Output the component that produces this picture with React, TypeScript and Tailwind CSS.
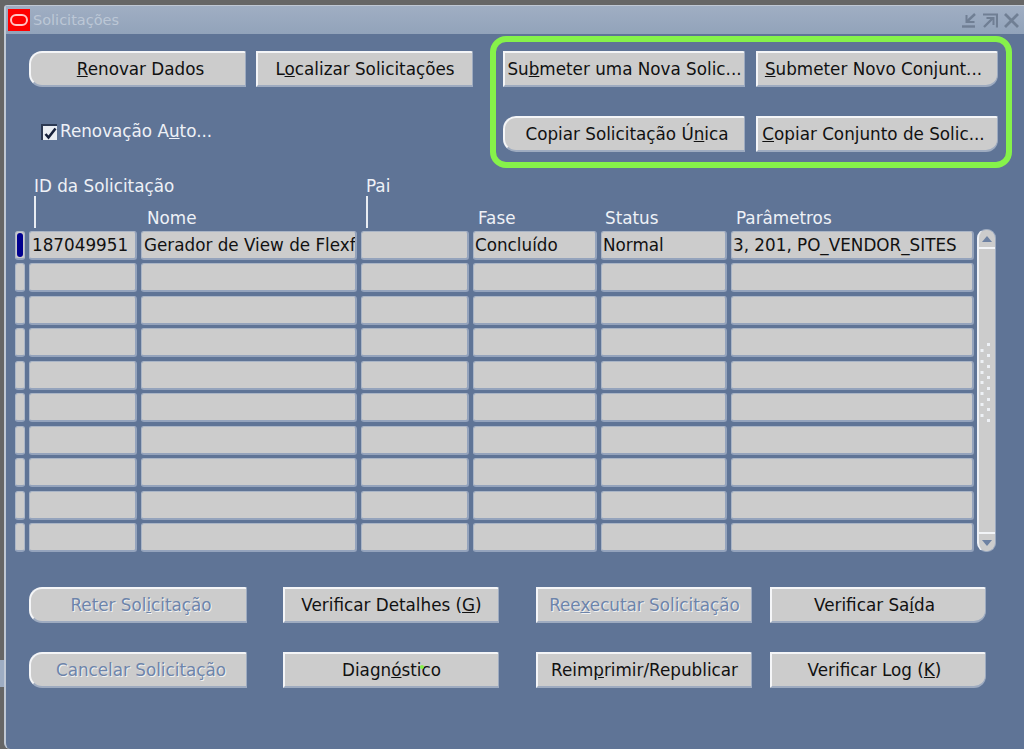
import React from "react";

const font = "font-['DejaVu_Sans',sans-serif]";

type Shape = "left" | "right" | "none";

function Btn({ w, shape = "none", disabled = false, children }: { w: string; shape?: Shape; disabled?: boolean; children: React.ReactNode }) {
  const r = shape === "left" ? "rounded-l-[13px] pl-[5px]" : shape === "right" ? "rounded-r-[12px] pr-[8px]" : "";
  const t = disabled
    ? "text-[#6d84aa] [text-shadow:1px_1px_0_#f2f2f2]"
    : "text-[#111111]";
  return (
    <div
      className={`${w} ${r} ${t} h-[36px] shrink-0 flex items-center justify-center whitespace-nowrap bg-[#cccccc] border-t-2 border-l-2 border-t-[#f4f5f7] border-l-[#f4f5f7] border-b-2 border-r border-b-[#9eabc0] border-r-[#9eabc0] rounded-tr-[2px] pt-[2px] text-[16.8px]`}
    >
      {children}
    </div>
  );
}

function Cell({ children }: { children?: React.ReactNode }) {
  return (
    <div className="bg-[#cccccc] rounded-[3px] border border-[#aab5c6] border-b-2 border-r-2 border-b-[#94a3bc] border-r-[#94a3bc] flex items-center pl-[1px] pt-[2px] text-[16.8px] text-[#111111] whitespace-nowrap overflow-hidden">
      {children}
    </div>
  );
}

function Selector({ active }: { active?: boolean }) {
  return (
    <div className="bg-[#cccccc] rounded-[3px] border border-[#aeb8c8] border-b-2 border-b-[#94a3bc] flex p-px">
      {active && <div className="flex-1 bg-[#00008f] rounded-[3px]" />}
    </div>
  );
}

function Tick() {
  return <div className="w-[2px] h-[32px] bg-[#e8ecf2] ml-[5px] shrink-0" />;
}

function Grip() {
  const left = [349, 360, 371, 381, 392, 403, 414];
  const right = [343, 354, 365, 376, 387, 398, 408, 419];
  return (
    <svg width="14" height="82" viewBox="981 340 14 82" className="mb-[20px]">
      {left.map((y) => (
        <rect key={`l${y}`} x="981.5" y={y} width="3" height="3" fill="#eef1f6" />
      ))}
      {right.map((y) => (
        <rect key={`r${y}`} x="988" y={y} width="3" height="3" fill="#eef1f6" />
      ))}
    </svg>
  );
}

const rowBlank = [2, 3, 4, 5, 6, 7, 8, 9, 10];

export default function App() {
  return (
    <div className={`${font} relative w-[1024px] h-[749px] overflow-hidden bg-[#666666] pt-[5px] pl-[4px] flex flex-col`}>
      <div className="absolute left-0 top-[660px] w-[4px] h-[27px] bg-[#9dacc2]" />
      <div className="flex-1 flex flex-col bg-[#5f7496] border-l-2 border-t border-[#c0c8d4] rounded-tl-[3px] rounded-bl-[6px] min-h-0">
        {/* title bar */}
        <div className="h-[28px] shrink-0 bg-gradient-to-b from-[#a0aec3] to-[#92a3ba] flex items-center pl-[2px] pr-[5px]">
          <div className="w-[22px] h-[22px] bg-[#ff0000] flex items-center justify-center shrink-0">
            <div className="w-[18px] h-[12px] rounded-[6px] border-2 border-[#ffc4c4]" />
          </div>
          <span className="ml-[3px] pt-[2px] text-[14.5px] text-[#bcc7d6]">Solicitações</span>
          <div className="ml-auto flex items-center gap-[6px]">
            <svg width="15" height="15" viewBox="0 0 15 15" fill="none" stroke="#707f94" strokeWidth="2.4">
              <path d="M0 13.5h13" />
              <path d="M13 1 5 8.5" />
              <path d="M4.5 2v7h8" strokeWidth="2" />
            </svg>
            <svg width="15" height="15" viewBox="0 0 15 15" fill="none" stroke="#707f94" strokeWidth="2.2">
              <path d="M0 1.5h14v13" />
              <path d="M1 14 10 5" strokeWidth="2.4" />
              <path d="M3.5 5h7v7" strokeWidth="2" />
            </svg>
            <svg width="15" height="15" viewBox="0 0 15 15" fill="none" stroke="#707f94" strokeWidth="2.8">
              <path d="M1 1l13 13M14 1 1 14" />
            </svg>
          </div>
        </div>

        {/* top section */}
        <div className="flex pl-[23px] shrink-0">
          <div className="w-[461px] pt-[17px] shrink-0">
            <div className="flex gap-[10px]">
              <Btn w="w-[217px]" shape="left"><span><u>R</u>enovar Dados</span></Btn>
              <Btn w="w-[217px]"><span>L<u>o</u>calizar Solicitações</span></Btn>
            </div>
            <div className="flex items-center ml-[12px] mt-[37px] h-[16px]">
              <div className="w-[16px] h-[16px] bg-[#e9edf3] border-l-2 border-t-2 border-[#2b3852] flex items-center justify-center shrink-0">
                <svg width="13" height="13" viewBox="0 0 13 13" fill="none" stroke="#16203a" strokeWidth="2.6">
                  <path d="M1.5 7l3 3.5L11.5 1.5" />
                </svg>
              </div>
              <span className="ml-[3px] text-[16.8px] text-[#eef1f6] whitespace-nowrap">Renovação A<u>u</u>to...</span>
            </div>
          </div>
          <div className="mt-[2px] w-[522px] h-[132px] border-[6px] border-[#86f24a] rounded-[16px] pt-[9px] pl-[7px] flex flex-col gap-[29px] shrink-0">
            <div className="flex gap-[11px]">
              <Btn w="w-[242px]"><span>Su<u>b</u>meter uma Nova Solic...</span></Btn>
              <Btn w="w-[242px]" shape="right"><span><u>S</u>ubmeter Novo Conjunt...</span></Btn>
            </div>
            <div className="flex gap-[11px]">
              <Btn w="w-[242px]" shape="left"><span>Copiar Solicitação Ú<u>n</u>ica</span></Btn>
              <Btn w="w-[242px]" shape="right"><span><u>C</u>opiar Conjunto de Solic...</span></Btn>
            </div>
          </div>
        </div>

        {/* table header */}
        <div className="pl-[9px] mt-[8px] shrink-0 grid grid-cols-[10px_108px_216px_108px_124px_126px_243px] grid-rows-[20px_32px] gap-x-[4px] text-[16.8px] leading-[20px] text-[#eef1f6] whitespace-nowrap">
          <div />
          <div className="pl-[5px] col-span-2">ID da Solicitação</div>
          <div className="pl-[5px] col-span-4">Pai</div>
          <div />
          <Tick />
          <div className="pl-[6px] self-end">Nome</div>
          <Tick />
          <div className="pl-[5px] self-end">Fase</div>
          <div className="pl-[4px] self-end">Status</div>
          <div className="pl-[5px] self-end">Parâmetros</div>
        </div>

        {/* table body */}
        <div className="pl-[9px] mt-[1px] shrink-0 flex">
          <div className="mt-[2px] h-[321px] grid grid-cols-[10px_108px_216px_108px_124px_126px_243px] grid-rows-[repeat(10,1fr)] gap-x-[4px] gap-y-[3.4px]">
            <Selector active />
            <Cell><span className="pl-[1px]">187049951</span></Cell>
            <Cell><span className="pl-[1px]">Gerador de View de Flexf</span></Cell>
            <Cell />
            <Cell>Concluído</Cell>
            <Cell>Normal</Cell>
            <Cell>3, 201, PO_VENDOR_SITES</Cell>
            {rowBlank.map((r) => (
              <React.Fragment key={r}>
                <Selector />
                <Cell />
                <Cell />
                <Cell />
                <Cell />
                <Cell />
                <Cell />
              </React.Fragment>
            ))}
          </div>
          <div className="ml-[3px] w-[19px] h-[323px] bg-[#cccccc] rounded-[9px] border border-l-2 border-[#9ba9c0] border-l-[#eef1f6] flex flex-col shrink-0">
            <div className="h-[19px] border-b-2 border-[#f2f4f7] flex items-center justify-center shrink-0">
              <svg width="10" height="6" viewBox="0 0 10 6"><path d="M5 0l5 6H0z" fill="#6e82a3" /></svg>
            </div>
            <div className="flex-1 flex items-center justify-center">
              <Grip />
            </div>
            <div className="h-[19px] border-t-2 border-[#f2f4f7] flex items-center justify-center shrink-0">
              <svg width="10" height="6" viewBox="0 0 10 6"><path d="M5 6 10 0H0z" fill="#6e82a3" /></svg>
            </div>
          </div>
        </div>

        {/* bottom buttons */}
        <div className="pl-[23px] mt-[35px] flex flex-col gap-[29px] shrink-0">
          <div className="flex">
            <Btn w="w-[218px]" shape="left" disabled><span>Reter Sol<u>i</u>citação</span></Btn>
            <div className="ml-[36px]"><Btn w="w-[216px]"><span>Verificar Detalhes (<u>G</u>)</span></Btn></div>
            <div className="ml-[37px]"><Btn w="w-[216px]" disabled><span>Ree<u>x</u>ecutar Solicitação</span></Btn></div>
            <div className="ml-[18px]"><Btn w="w-[216px]" shape="right"><span>Verificar Sa<u>í</u>da</span></Btn></div>
          </div>
          <div className="flex">
            <Btn w="w-[218px]" shape="left" disabled><span>Cancelar Solicitação</span></Btn>
            <div className="ml-[36px] relative">
              <Btn w="w-[216px]"><span>Diagn<u>ó</u>stico</span></Btn>
              <div className="absolute left-[137px] top-[13px] w-[4px] h-[4px] rounded-full bg-[#86f24a]" />
            </div>
            <div className="ml-[37px]"><Btn w="w-[216px]"><span>Reim<u>p</u>rimir/Republicar</span></Btn></div>
            <div className="ml-[18px]"><Btn w="w-[216px]" shape="right"><span>Verificar Log (<u>K</u>)</span></Btn></div>
          </div>
        </div>
      </div>
    </div>
  );
}
